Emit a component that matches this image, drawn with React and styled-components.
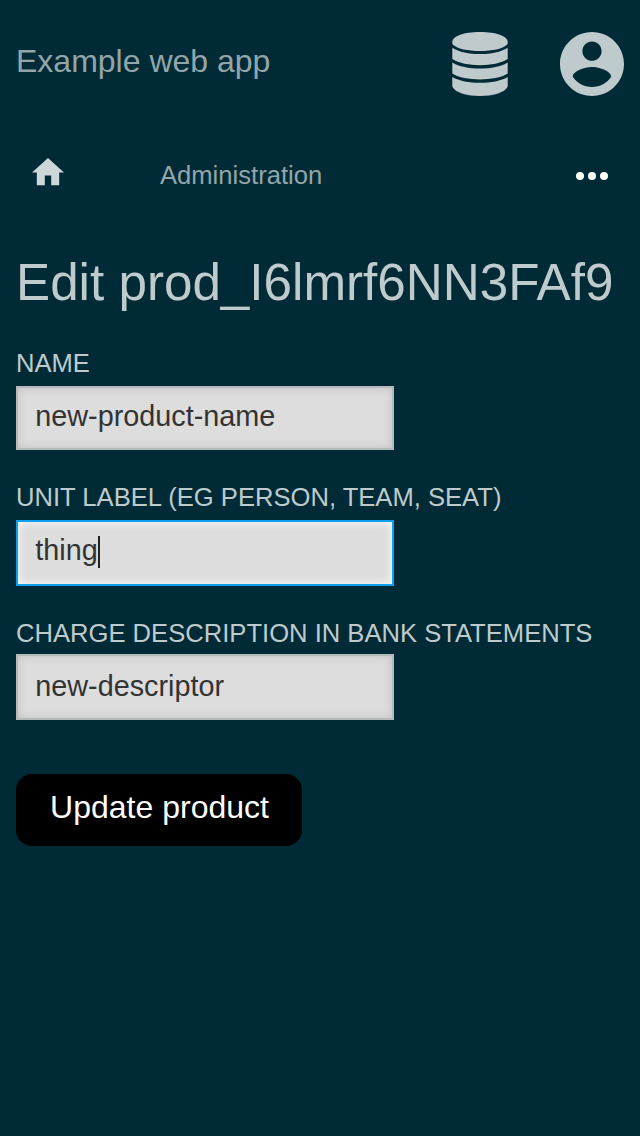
import React from "react";
import styled, { createGlobalStyle } from "styled-components";

const Global = createGlobalStyle`
  * { box-sizing: border-box; }
  body { margin: 0; background: #002b36; color: #bfcacd; font-family: "Liberation Sans", Arial, sans-serif; }
`;
const Page = styled.div`min-height: 1136px; background: #002b36; overflow: hidden;`;
const Header = styled.header`
  display: flex; align-items: center; height: 128px; padding: 0 16px; gap: 48px;
`;
const Brand = styled.div`flex: 1; font-size: 32px; line-height: 36px; color: #93a5aa; padding-bottom: 6px;`;
const HeaderIcon = styled.svg`display: block; width: 64px; height: 64px; fill: #bfcacd;`;
const Nav = styled.nav`display: flex; align-items: center; height: 96px; padding: 0 32px;`;
const NavHome = styled.svg`display: block; width: 32px; height: 27.2px; margin: -8px 96px 0 0; fill: #cdd6d8;`;
const NavLink = styled.span`flex: 1; font-size: 25.6px; line-height: 30px; color: #93a5aa; padding-bottom: 2px;`;
const Dots = styled.svg`display: block;`;
const Main = styled.main`padding: 29px 16px 0;`;
const Title = styled.h1`margin: 0 0 35px; font-size: 51.2px; line-height: 60px; font-weight: 400; white-space: nowrap;`;
const Field = styled.div`margin-bottom: ${(p) => p.$gap}px;`;
const Label = styled.div`
  font-size: 25.6px; line-height: 30px; height: ${(p) => p.$h || 38}px;
  text-transform: uppercase; white-space: nowrap;
`;
const Box = styled.div`
  display: flex; align-items: flex-start; width: 378px; height: ${(p) => p.$h}px;
  padding: ${(p) => p.$top}px 17.28px 0; line-height: 32px;
  border: 2px solid ${(p) => (p.$focus ? "#109fed" : "#b5b9b9")};
  background: #dddddd; color: #333; font-size: 28.8px;
  box-shadow: inset 0 0 ${(p) => (p.$focus ? "10px rgba(255, 255, 255, 0.9)" : "10px rgba(0, 0, 0, 0.13)")};
`;
const Caret = styled.span`width: 2px; height: 32px; margin-top: 2px; background: #222;`;
const Button = styled.button`
  display: block; width: 286px; height: 72px; padding: 0 0 5px 1px; border: 0; border-radius: 16px;
  background: #000; color: #fff; font: 32px "Liberation Sans", Arial, sans-serif;
`;

export default function App() {
  return (
    <Page>
      <Global />
      <Header>
        <Brand>Example web app</Brand>
        <HeaderIcon viewBox="0 0 64 64">
          <path d="M4.3 10C4.3 4 16 0 32 0S59.7 4 59.7 10V12C55 17 44 19 32 19S9 17 4.3 12Z" />
          <path d="M4.3 15.7C11 20 21 22 32 22S53 20 59.7 15.7V27C53 31.2 43 33.2 32 33.2S11 31.2 4.3 27Z" />
          <path d="M4.3 30.5C11 34.6 21 36.5 32 36.5S53 34.6 59.7 30.5V41.5C53 45.6 43 47.4 32 47.4S11 45.6 4.3 41.5Z" />
          <path d="M4.3 45C11 49 21 50.8 32 50.8S53 49 59.7 45V54.5C57 61 44 64 32 64S7 61 4.3 54.5Z" />
        </HeaderIcon>
        <HeaderIcon viewBox="2 2 20 20">
          <path d="M12 2C6.48 2 2 6.48 2 12s4.48 10 10 10 10-4.48 10-10S17.52 2 12 2zm0 3c1.66 0 3 1.34 3 3s-1.34 3-3 3-3-1.34-3-3 1.34-3 3-3zm0 14.2c-2.5 0-4.71-1.28-6-3.22.03-1.99 4-3.08 6-3.08 1.99 0 5.97 1.09 6 3.08-1.29 1.94-3.5 3.22-6 3.22z" />
        </HeaderIcon>
      </Header>
      <Nav>
        <NavHome viewBox="2 3 20 17"><path d="M10 20v-6h4v6h5v-8h3L12 3 2 12h3v8z" /></NavHome>
        <NavLink>Administration</NavLink>
        <Dots width="32" height="8" fill="#fff">
          <circle cx="4" cy="4" r="4" /><circle cx="16" cy="4" r="4" /><circle cx="28" cy="4" r="4" />
        </Dots>
      </Nav>
      <Main>
        <Title>Edit prod_I6lmrf6NN3FAf9</Title>
        <Field $gap={32}><Label>Name</Label><Box $h={64} $top={12}>new-product-name</Box></Field>
        <Field $gap={32}>
          <Label>Unit label (eg person, team, seat)</Label>
          <Box $h={66} $top={12} $focus>thing<Caret /></Box>
        </Field>
        <Field $gap={54}>
          <Label $h={36}>Charge description in bank statements</Label>
          <Box $h={66} $top={14}>new-descriptor</Box>
        </Field>
        <Button>Update product</Button>
      </Main>
    </Page>
  );
}
